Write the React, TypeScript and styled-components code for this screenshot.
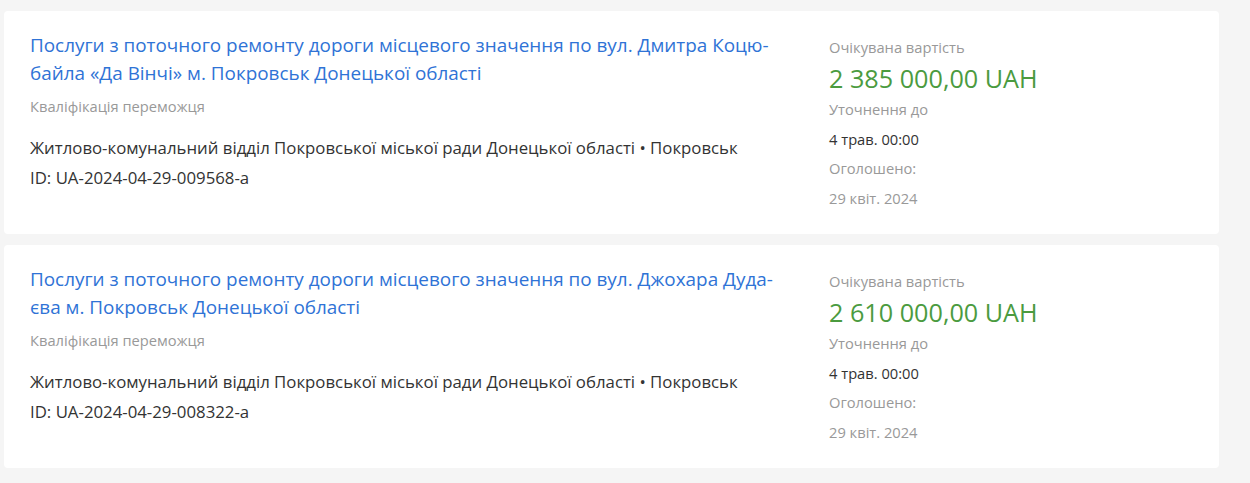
import styled, { createGlobalStyle } from "styled-components";

const GlobalStyle = createGlobalStyle`
  html, body {
    margin: 0;
    padding: 0;
    background: #f5f5f5;
    font-family: "Open Sans", "Noto Sans", sans-serif;
  }
`;

const Page = styled.div`
  display: flex;
  flex-direction: column;
  gap: 11px;
  padding: 11px 31px 16px 4px;
`;

const Card = styled.div`
  display: flex;
  background: #fff;
  border-radius: 4px;
  padding: 20px 26px 21px 26px;
`;

const Main = styled.div`
  width: 760px;
  flex: none;
`;

const Side = styled.div`
  margin-left: 39px;
  padding-top: 6px;
  display: flex;
  flex-direction: column;
`;

const Title = styled.a`
  display: block;
  font-size: 18.9px;
  line-height: 28px;
  color: #2f73d6;
  text-decoration: none;
  max-width: 750px;
`;

const Status = styled.div`
  margin-top: 9px;
  font-size: 14.7px;
  line-height: 20px;
  color: #999;
`;

const Org = styled.div`
  margin-top: 17px;
  font-size: 16.8px;
  line-height: 30px;
  color: #333;
`;

const Label = styled.div<{ $dark?: boolean }>`
  font-size: 14.7px;
  line-height: 29.5px;
  color: ${(p) => (p.$dark ? "#333" : "#999")};
`;

const TopLabel = styled(Label)`
  line-height: 20px;
`;

const Price = styled.div`
  margin-top: 5px;
  margin-bottom: 1px;
  font-size: 25.2px;
  line-height: 32px;
  color: #4b9b3f;
`;

type Tender = {
  title: string;
  id: string;
  price: string;
};

const tenders: Tender[] = [
  {
    title:
      "Послуги з поточного ремонту дороги місцевого значення по вул. Дмитра Коцю\u00ADбайла «Да Вінчі» м. Покровськ Донецької області",
    id: "UA-2024-04-29-009568-a",
    price: "2 385 000,00 UAH",
  },
  {
    title:
      "Послуги з поточного ремонту дороги місцевого значення по вул. Джохара Дуда\u00ADєва м. Покровськ Донецької області",
    id: "UA-2024-04-29-008322-a",
    price: "2 610 000,00 UAH",
  },
];

export default function App() {
  return (
    <>
      <GlobalStyle />
      <Page>
        {tenders.map((t) => (
          <Card key={t.id}>
            <Main>
              <Title href="#">{t.title}</Title>
              <Status>Кваліфікація переможця</Status>
              <Org>
                Житлово-комунальний відділ Покровської міської ради Донецької
                області • Покровськ
                <br />
                ID: {t.id}
              </Org>
            </Main>
            <Side>
              <TopLabel>Очікувана вартість</TopLabel>
              <Price>{t.price}</Price>
              <Label>Уточнення до</Label>
              <Label $dark>4 трав. 00:00</Label>
              <Label>Оголошено:</Label>
              <Label>29 квіт. 2024</Label>
            </Side>
          </Card>
        ))}
      </Page>
    </>
  );
}
